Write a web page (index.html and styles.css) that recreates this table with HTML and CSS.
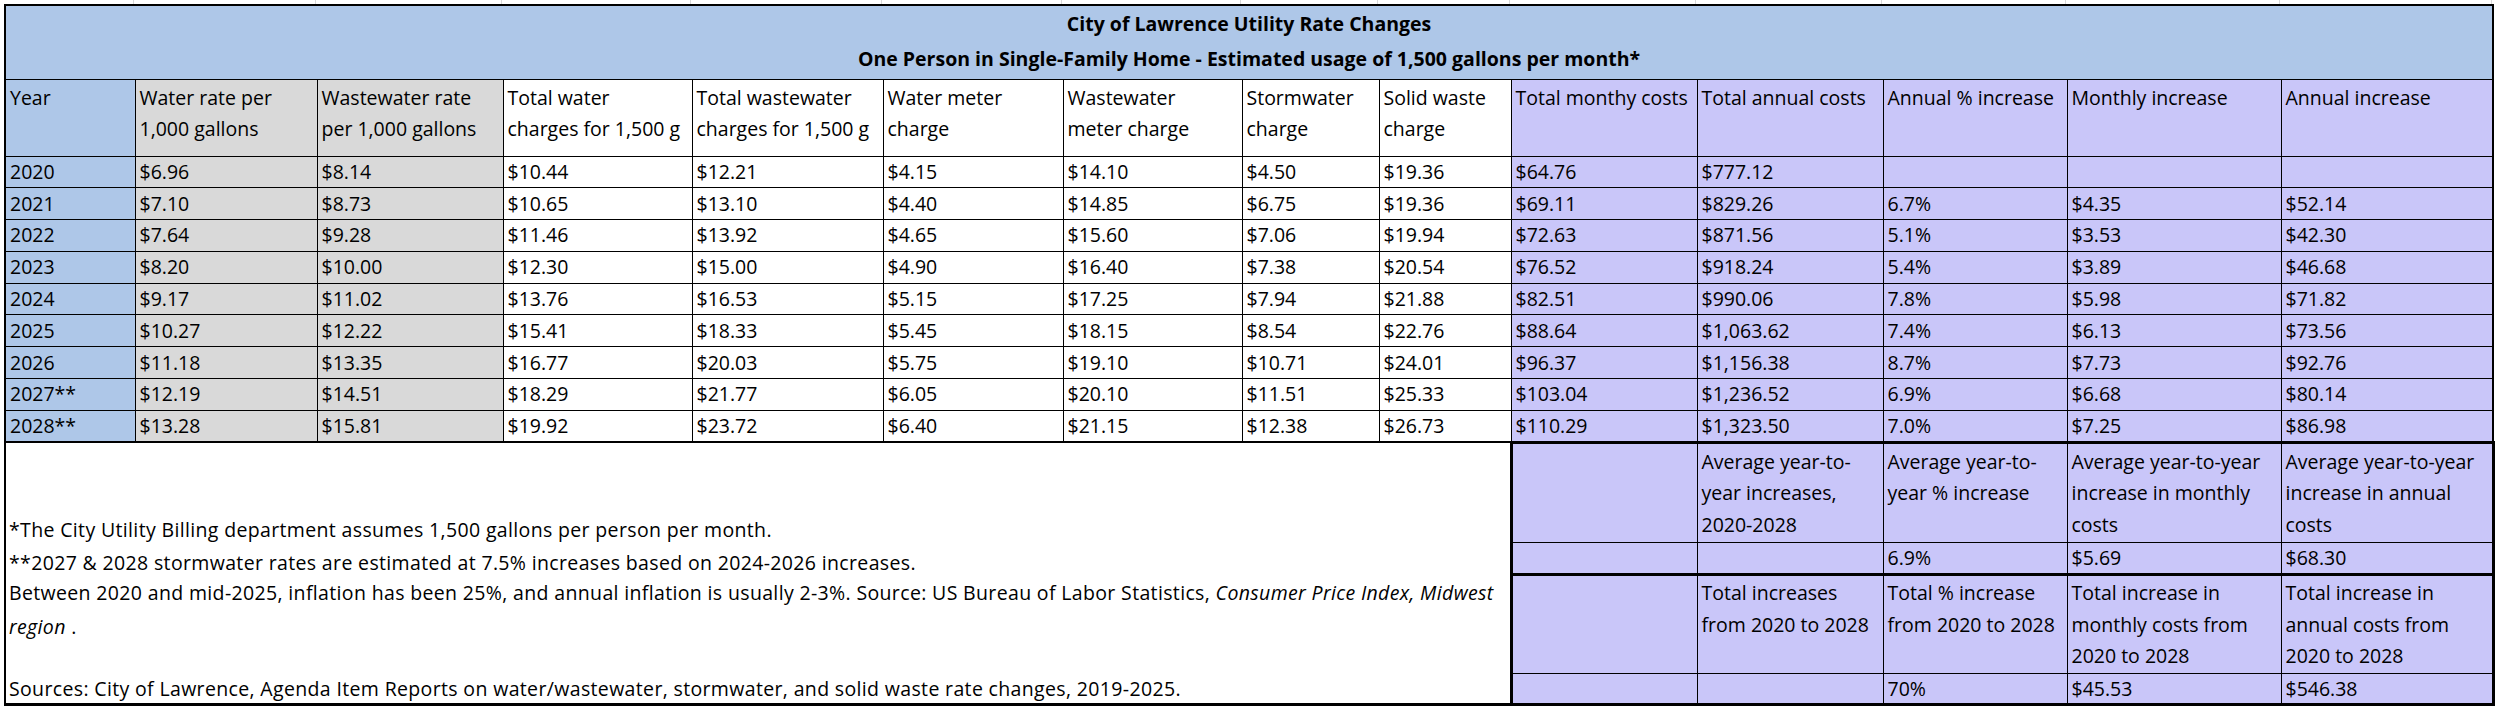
FILE: index.html
```html
<!DOCTYPE html>
<html lang="en">
<head>
<meta charset="utf-8">
<title>City of Lawrence Utility Rate Changes</title>
<link rel="stylesheet" href="styles.css">
</head>
<body>
<div class="page">
  <div class="gridstrip">
    <span class="g1"></span><span class="g2"></span><span class="g3"></span><span class="g4"></span><span class="g5"></span><span class="g6"></span><span class="g7"></span><span class="g8"></span><span class="g9"></span><span class="g10"></span><span class="g11"></span><span class="g12"></span><span class="g13"></span><span class="g14"></span>
  </div>
  <table class="sheet">
    <colgroup>
      <col class="w1"><col class="w2"><col class="w3"><col class="w4"><col class="w5"><col class="w6"><col class="w7"><col class="w8"><col class="w9"><col class="w10"><col class="w11"><col class="w12"><col class="w13"><col class="w14">
    </colgroup>
    <tbody>
      <tr class="r-title">
        <td colspan="14" class="title">
          <div class="title-line">City of Lawrence Utility Rate Changes</div>
          <div class="title-line">One Person in Single-Family Home - Estimated usage of 1,500 gallons per month*</div>
        </td>
      </tr>
      <tr class="r-head">
        <td class="blue head">Year</td>
        <td class="gray head">Water rate per<br>1,000 gallons</td>
        <td class="gray head">Wastewater rate<br>per 1,000 gallons</td>
        <td class="head">Total water<br>charges for 1,500 g</td>
        <td class="head">Total wastewater<br>charges for 1,500 g</td>
        <td class="head">Water meter<br>charge</td>
        <td class="head">Wastewater<br>meter charge</td>
        <td class="head">Stormwater<br>charge</td>
        <td class="head">Solid waste<br>charge</td>
        <td class="purple head">Total monthy costs</td>
        <td class="purple head">Total annual costs</td>
        <td class="purple head">Annual % increase</td>
        <td class="purple head">Monthly increase</td>
        <td class="purple head">Annual increase</td>
      </tr>
      <tr class="r-data">
        <td class="blue">2020</td><td class="gray">$6.96</td><td class="gray">$8.14</td><td>$10.44</td><td>$12.21</td><td>$4.15</td><td>$14.10</td><td>$4.50</td><td>$19.36</td><td class="purple">$64.76</td><td class="purple">$777.12</td><td class="purple"></td><td class="purple"></td><td class="purple"></td>
      </tr>
      <tr class="r-data">
        <td class="blue">2021</td><td class="gray">$7.10</td><td class="gray">$8.73</td><td>$10.65</td><td>$13.10</td><td>$4.40</td><td>$14.85</td><td>$6.75</td><td>$19.36</td><td class="purple">$69.11</td><td class="purple">$829.26</td><td class="purple">6.7%</td><td class="purple">$4.35</td><td class="purple">$52.14</td>
      </tr>
      <tr class="r-data">
        <td class="blue">2022</td><td class="gray">$7.64</td><td class="gray">$9.28</td><td>$11.46</td><td>$13.92</td><td>$4.65</td><td>$15.60</td><td>$7.06</td><td>$19.94</td><td class="purple">$72.63</td><td class="purple">$871.56</td><td class="purple">5.1%</td><td class="purple">$3.53</td><td class="purple">$42.30</td>
      </tr>
      <tr class="r-data">
        <td class="blue">2023</td><td class="gray">$8.20</td><td class="gray">$10.00</td><td>$12.30</td><td>$15.00</td><td>$4.90</td><td>$16.40</td><td>$7.38</td><td>$20.54</td><td class="purple">$76.52</td><td class="purple">$918.24</td><td class="purple">5.4%</td><td class="purple">$3.89</td><td class="purple">$46.68</td>
      </tr>
      <tr class="r-data">
        <td class="blue">2024</td><td class="gray">$9.17</td><td class="gray">$11.02</td><td>$13.76</td><td>$16.53</td><td>$5.15</td><td>$17.25</td><td>$7.94</td><td>$21.88</td><td class="purple">$82.51</td><td class="purple">$990.06</td><td class="purple">7.8%</td><td class="purple">$5.98</td><td class="purple">$71.82</td>
      </tr>
      <tr class="r-data">
        <td class="blue">2025</td><td class="gray">$10.27</td><td class="gray">$12.22</td><td>$15.41</td><td>$18.33</td><td>$5.45</td><td>$18.15</td><td>$8.54</td><td>$22.76</td><td class="purple">$88.64</td><td class="purple">$1,063.62</td><td class="purple">7.4%</td><td class="purple">$6.13</td><td class="purple">$73.56</td>
      </tr>
      <tr class="r-data">
        <td class="blue">2026</td><td class="gray">$11.18</td><td class="gray">$13.35</td><td>$16.77</td><td>$20.03</td><td>$5.75</td><td>$19.10</td><td>$10.71</td><td>$24.01</td><td class="purple">$96.37</td><td class="purple">$1,156.38</td><td class="purple">8.7%</td><td class="purple">$7.73</td><td class="purple">$92.76</td>
      </tr>
      <tr class="r-data">
        <td class="blue">2027**</td><td class="gray">$12.19</td><td class="gray">$14.51</td><td>$18.29</td><td>$21.77</td><td>$6.05</td><td>$20.10</td><td>$11.51</td><td>$25.33</td><td class="purple">$103.04</td><td class="purple">$1,236.52</td><td class="purple">6.9%</td><td class="purple">$6.68</td><td class="purple">$80.14</td>
      </tr>
      <tr class="r-data r-last">
        <td class="blue">2028**</td><td class="gray">$13.28</td><td class="gray">$15.81</td><td>$19.92</td><td>$23.72</td><td>$6.40</td><td>$21.15</td><td>$12.38</td><td>$26.73</td><td class="purple">$110.29</td><td class="purple">$1,323.50</td><td class="purple">7.0%</td><td class="purple">$7.25</td><td class="purple">$86.98</td>
      </tr>
      <tr class="r-sum-head">
        <td colspan="9" rowspan="4" class="notes">
          <div class="notes-grid">
            <div class="note n1">*The City Utility Billing department assumes 1,500 gallons per person per month.</div>
            <div class="note n2">**2027 &amp; 2028 stormwater rates are estimated at 7.5% increases based on 2024-2026 increases.</div>
            <div class="note n3">Between 2020 and mid-2025, inflation has been 25%, and annual inflation is usually 2-3%. Source: US Bureau of Labor Statistics, <i>Consumer Price Index, Midwest</i><br><i>region </i>.</div>
            <div class="note n4">Sources: City of Lawrence, Agenda Item Reports on water/wastewater, stormwater, and solid waste rate changes, 2019-2025.</div>
          </div>
        </td>
        <td class="purple sum-head g-top g-left"></td>
        <td class="purple sum-head g-top">Average year-to-<br>year increases,<br>2020-2028</td>
        <td class="purple sum-head g-top">Average year-to-<br>year % increase</td>
        <td class="purple sum-head g-top">Average year-to-year<br>increase in monthly<br>costs</td>
        <td class="purple sum-head g-top g-right">Average year-to-year<br>increase in annual<br>costs</td>
      </tr>
      <tr class="r-sum-val">
        <td class="purple g-left g-bot"></td>
        <td class="purple g-bot"></td>
        <td class="purple g-bot">6.9%</td>
        <td class="purple g-bot">$5.69</td>
        <td class="purple g-bot g-right">$68.30</td>
      </tr>
      <tr class="r-sum-head2">
        <td class="purple sum-head2 g-top g-left"></td>
        <td class="purple sum-head2 g-top">Total increases<br>from 2020 to 2028</td>
        <td class="purple sum-head2 g-top">Total % increase<br>from 2020 to 2028</td>
        <td class="purple sum-head2 g-top">Total increase in<br>monthly costs from<br>2020 to 2028</td>
        <td class="purple sum-head2 g-top g-right">Total increase in<br>annual costs from<br>2020 to 2028</td>
      </tr>
      <tr class="r-sum-val2">
        <td class="purple g-left g-bot"></td>
        <td class="purple g-bot"></td>
        <td class="purple g-bot">70%</td>
        <td class="purple g-bot">$45.53</td>
        <td class="purple g-bot g-right">$546.38</td>
      </tr>
    </tbody>
  </table>
</div>
</body>
</html>
```

FILE: styles.css
```css
html, body {
  margin: 0;
  padding: 0;
  background: #ffffff;
}

body {
  font-family: "Open Sans", Lato, "DejaVu Sans", sans-serif;
  font-size: 19.5px;
  color: #000;
}

.page {
  padding: 0 0 0 4px;
}

/* faint spreadsheet gridlines above the table */
.gridstrip {
  display: flex;
  height: 4px;
  width: 2488px;
}
.gridstrip span {
  border-right: 1px solid #d8d8d8;
  box-sizing: border-box;
  height: 4px;
}
.g1 { width: 130px; } .g2 { width: 182px; } .g3 { width: 186px; } .g4 { width: 189px; }
.g5 { width: 191px; } .g6 { width: 180px; } .g7 { width: 179px; } .g8 { width: 137px; }
.g9 { width: 132px; } .g10 { width: 186px; } .g11 { width: 186px; } .g12 { width: 184px; }
.g13 { width: 214px; } .g14 { width: 212px; }

.sheet {
  border-collapse: collapse;
  table-layout: fixed;
  width: 2488px;
  border: 2px solid #000;
}

.w1 { width: 130px; } .w2 { width: 182px; } .w3 { width: 186px; } .w4 { width: 189px; }
.w5 { width: 191px; } .w6 { width: 180px; } .w7 { width: 179px; } .w8 { width: 137px; }
.w9 { width: 132px; } .w10 { width: 186px; } .w11 { width: 186px; } .w12 { width: 184px; }
.w13 { width: 214px; } .w14 { width: 212px; }

.sheet td {
  border: 1px solid #000;
  padding: 0 0 0 4px;
  white-space: nowrap;
  overflow: hidden;
  line-height: 26px;
  vertical-align: middle;
  text-align: left;
}

.blue { background: #aec7e8; }
.gray { background: #d9d9d9; }
.purple { background: #c9c6f9; }

/* title band */
.r-title { height: 74px; }
.sheet td.title {
  background: #aec7e8;
  text-align: center;
  vertical-align: top;
  font-weight: 700;
  padding: 0;
}
.title-line {
  line-height: 35px;
}

/* header row */
.r-head { height: 77px; }
.sheet td.head {
  vertical-align: top;
  line-height: 31px;
  padding-top: 2px;
}

/* data rows */
.r-data { height: 31.8px; }
.sheet .r-last td { border-bottom: 2px solid #000; }

/* summary rows */
.r-sum-head { height: 100px; }
.r-sum-val { height: 32px; }
.r-sum-head2 { height: 98px; }
.r-sum-val2 { height: 31px; }

.sheet td.sum-head {
  vertical-align: top;
  line-height: 31.5px;
  padding-top: 2px;
}
.sheet td.sum-head2 {
  vertical-align: top;
  line-height: 31.5px;
  padding-top: 1px;
}

.sheet td.g-top { border-top: 3px solid #000; }
.sheet td.g-bot { border-bottom: 3px solid #000; }
.sheet td.g-left { border-left: 3px solid #000; }
.sheet td.g-right { border-right: 3px solid #000; }

/* footnotes block */
.sheet td.notes {
  background: #fff;
  vertical-align: top;
  padding: 0 0 0 3px;
  border-left: 2px solid #000;
  border-bottom: 3px solid #000;
}
.notes-grid {
  display: grid;
  grid-template-rows: 100px 32px 98px 30px;
}
.note {
  white-space: nowrap;
  letter-spacing: 0.35px;
}
.n1 { align-self: end; line-height: 26px; }
.n2 { align-self: end; line-height: 24px; }
.n3 { align-self: start; line-height: 34px; padding-top: 1px; }
.n4 { align-self: end; line-height: 28px; }
```
